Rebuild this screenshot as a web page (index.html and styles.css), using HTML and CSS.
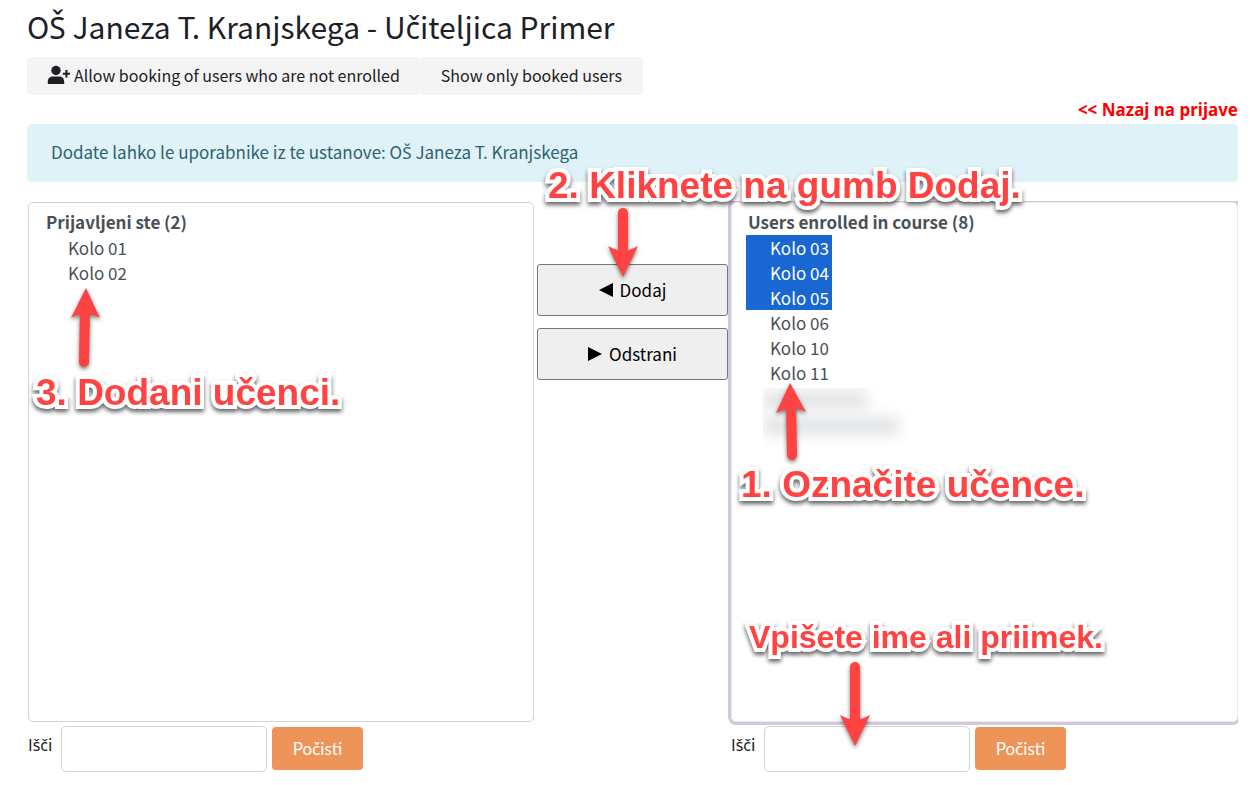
FILE: index.html
```html
<!DOCTYPE html>
<html lang="sl">
<head>
<meta charset="utf-8">
<meta name="viewport" content="width=device-width, initial-scale=1">
<title>OŠ Janeza T. Kranjskega - Učiteljica Primer</title>
<link rel="stylesheet" href="styles.css">
</head>
<body>
<main class="page">
  <h1 class="title">O<span class="caron">Š</span> Janeza T. Kranjskega - U<span class="caron">č</span>iteljica Primer</h1>
  <div class="toolbar">
    <button type="button" class="tool"><svg class="tool-icon" viewBox="0 0 24 20" aria-hidden="true"><circle cx="9" cy="5.5" r="4.7"/><path d="M.8 19v-2.300C.8 13.500 3 11.600 6 11.600h6c3 0 5.200 1.900 5.200 5.100V19zM18.400 5h2.100v2.700H23v2h-2.500v2.700h-2.100V9.700h-2.600v-2h2.600z"/></svg>Allow booking of users who are not enrolled</button>
    <button type="button" class="tool">Show only booked users</button>
  </div>
  <p class="back"><a href="#" class="back-link">&lt;&lt; Nazaj na prijave</a></p>
  <div class="alert" role="alert">Dodate lahko le uporabnike iz te ustanove: O<span class="caron">Š</span> Janeza T. Kranjskega</div>

  <div class="selector">
    <section class="column column-left">
      <select multiple class="list" aria-label="Prijavljeni ste">
        <optgroup label="Prijavljeni ste (2)">
          <option>Kolo 01</option>
          <option>Kolo 02</option>
        </optgroup>
      </select>
      <div class="search">
        <label class="search-label" for="search-left">I<span class="caron">šč</span>i</label>
        <input class="search-input" id="search-left" type="text">
        <button type="button" class="clear">Počisti</button>
      </div>
      <svg class="arrow arrow-added" viewBox="0 0 40 90" aria-hidden="true"><path class="shaft" d="M20 76L21 24"/><path d="M22 2L36 32Q28 28 21 28Q14 28 7 32z"/></svg>
      <span class="note note-added">3. Dodani učenci.</span>
    </section>

    <div class="actions">
      <button type="button" class="action"><svg class="tri" viewBox="0 0 14 14" aria-hidden="true"><path d="M0 7L14 0V14z"/></svg>Dodaj</button>
      <button type="button" class="action"><svg class="tri" viewBox="0 0 14 14" aria-hidden="true"><path d="M14 7L0 0V14z"/></svg>Odstrani</button>
      <svg class="arrow arrow-add" viewBox="0 0 40 90" aria-hidden="true"><path class="shaft" d="M20 10V50"/><path d="M20 74L5 43Q14 48 20 48Q26 48 35 43z"/></svg>
      <span class="note note-add">2. Kliknete na gumb Dodaj.</span>
    </div>

    <section class="column">
      <select multiple class="list list-focus" aria-label="Users enrolled in course">
        <optgroup label="Users enrolled in course (8)">
          <option class="picked">Kolo 03</option>
          <option class="picked">Kolo 04</option>
          <option class="picked">Kolo 05</option>
          <option>Kolo 06</option>
          <option>Kolo 10</option>
          <option>Kolo 11</option>
        </optgroup>
      </select>
      <div class="search">
        <label class="search-label" for="search-right">I<span class="caron">šč</span>i</label>
        <input class="search-input" id="search-right" type="text">
        <button type="button" class="clear">Počisti</button>
      </div>
      <div class="hidden-names" aria-hidden="true"><div class="smudge"></div><div class="smudge smudge-long"></div></div>
      <svg class="arrow arrow-mark" viewBox="0 0 40 90" aria-hidden="true"><path class="shaft" d="M21 74L20 24"/><path d="M19 2L35 31Q27 27 20 27Q13 28 5 32z"/></svg>
      <span class="note note-mark">1. Označite učence.</span>
      <span class="note note-small note-type">Vpišete ime ali priimek.</span>
      <svg class="arrow arrow-type" viewBox="0 0 40 100" aria-hidden="true"><path class="shaft" d="M20 10V65"/><path d="M20 89L5 58Q14 63 20 63Q26 63 35 58z"/></svg>
    </section>
  </div>
</main>
</body>
</html>
```
FILE: styles.css
```css
* { box-sizing: border-box; }
body {
  margin: 0;
  background: #fff;
  color: #1d2125;
  font-family: "Noto Sans CJK SC", "Noto Sans", sans-serif;
  font-size: 16px;
  line-height: 24px;
}
button, input, select { font: inherit; }
/* The CJK family composes š and č badly, so these letters use Noto Sans. */
.caron { font-family: "Noto Sans", sans-serif; line-height: 1; }
.page { padding: 4px 21px 12px 27px; }
.title { margin: 0; font-size: 30px; line-height: 44px; font-weight: 400; }
.toolbar { display: flex; margin-top: 9px; }
.tool {
  display: flex;
  align-items: center;
  gap: 3px;
  height: 38px;
  padding: 0 21px 2px 20px;
  border: 0;
  border-radius: 4px;
  background: #f4f4f4;
  color: #1d2125;
}
.tool-icon { width: 24px; height: 20px; fill: #1d2125; }
.back { margin: 2px 0; text-align: right; }
.back-link {
  color: #f00;
  font-family: "Noto Sans", sans-serif;
  font-size: 17px;
  font-weight: 700;
  text-decoration: none;
}
.alert {
  padding: 16px 24px 18px;
  border-radius: 5px;
  background: #def2f8;
  color: #306070;
  font-size: 17px;
}
.selector {
  display: grid;
  grid-template-columns: 1fr 197px 1fr;
  margin-top: 20px;
}
.column { position: relative; }
.column-left { padding-left: 1px; }
.list {
  display: block;
  width: 100%;
  height: 520px;
  padding: 6px 14px 6px 15px;
  border: 1px solid #ced4da;
  border-radius: 5px;
  background: #fff;
  color: #495057;
  font-size: 17px;
  outline: 0;
}
.list option { width: fit-content; min-height: 25px; padding: 0 3px 0 24px; }
.list-focus {
  padding-left: 14px;
  border-color: #f5e4e2;
  box-shadow: 0 0 0 3px #cecae0;
  clip-path: inset(-1px 0 -4px -4px);
}
.list .picked { background: #1967d2; color: #fff; }
.search { display: flex; margin-top: 4px; }
.search-label { width: 33px; padding-top: 6px; }
.search-input {
  width: 206px;
  height: 46px;
  padding: 0 12px;
  border: 1px solid #ced4da;
  border-radius: 5px;
}
.clear {
  width: 91px;
  height: 43px;
  margin: 1px 0 0 5px;
  padding: 0;
  border: 0;
  border-radius: 4px;
  background: #ef9459;
  color: #fff;
  font-family: Lato, sans-serif;
  font-size: 17px;
}
.actions {
  position: relative;
  display: flex;
  flex-direction: column;
  gap: 12px;
  padding: 62px 3px 0;
}
.action {
  display: flex;
  align-items: center;
  justify-content: center;
  gap: 7px;
  height: 52px;
  border: 1px solid #767676;
  border-radius: 3px;
  background: #efefef;
  color: #000;
  font-size: 17px;
}
.tri { width: 14px; height: 14px; }
.note {
  position: absolute;
  color: #ff4242;
  font: 700 37px/44px "Liberation Sans", Arial, sans-serif;
  white-space: nowrap;
  -webkit-text-stroke: 8px #fff;
  paint-order: stroke fill;
  stroke-linejoin: round;
  filter: drop-shadow(0 3px 2px #0009);
}
.note-small { font-size: 32px; }
.note-added { left: 9px; top: 169px; }
.note-add { left: 14px; top: -38px; z-index: 1; }
.note-mark { left: 10px; top: 261px; }
.note-type { left: 18px; top: 413px; }
.arrow {
  position: absolute;
  width: 40px;
  fill: #ff4242;
  filter: drop-shadow(0 2px 2px #0008);
}
.shaft { fill: none; stroke: #ff4242; stroke-width: 10px; stroke-linecap: round; }
.arrow-added { left: 37px; top: 84px; height: 90px; }
.arrow-add { left: 69px; top: 1px; height: 90px; }
.arrow-mark { left: 40px; top: 179px; height: 90px; }
.arrow-type { left: 104px; top: 455px; height: 100px; }
.hidden-names {
  position: absolute;
  left: 32px;
  top: 186px;
  width: 170px;
  height: 60px;
  overflow: hidden;
}
.smudge {
  width: 104px;
  height: 18px;
  margin-top: 3px;
  background: #e2e3e5;
  filter: blur(7px);
}
.smudge-long { width: 136px; margin-top: 8px; }
```
